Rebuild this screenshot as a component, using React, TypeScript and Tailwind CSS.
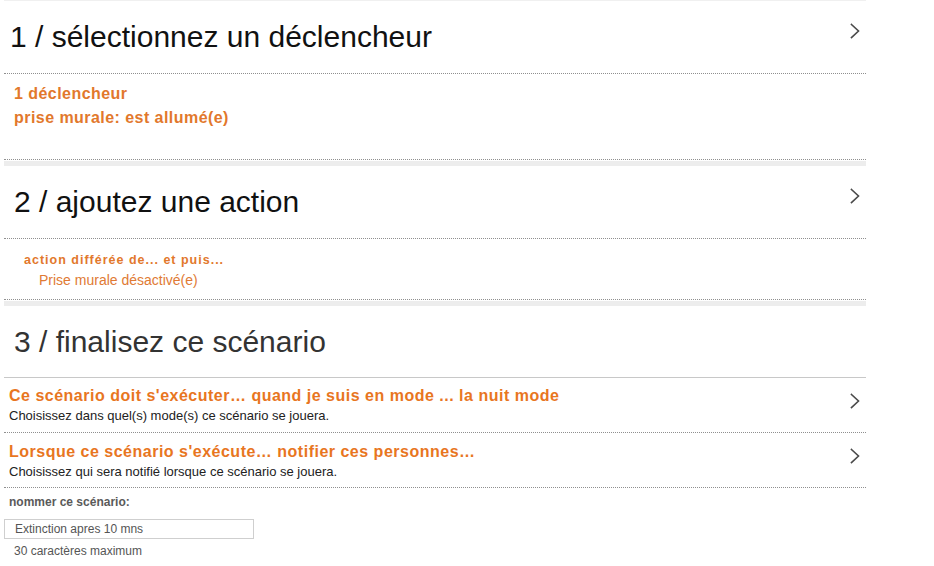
import React from "react";

const Chevron = ({ className = "" }: { className?: string }) => (
  <svg width="10" height="16" viewBox="0 0 10 16" className={className} fill="none">
    <path d="M1.5 1.5 L8.5 8 L1.5 14.5" stroke="#4a4a4a" strokeWidth="1.6" strokeLinecap="square" strokeLinejoin="miter" />
  </svg>
);

const Dotted = () => <div className="border-b border-dotted border-[#8f8f8f]" />;

const Band = () => (
  <>
    <div className="h-px bg-white" />
    <div className="h-[5px] bg-[#ededed]" />
  </>
);

export default function App() {
  return (
    <div
      className="w-[934px] h-[566px] overflow-hidden bg-white"
      style={{ fontFamily: '"Liberation Sans", Arial, sans-serif' }}
    >
      <div className="ml-[4px] w-[862px]">
        {/* Section 1 */}
        <div className="h-px bg-[#f0f0f0]" />
        <div className="h-[72px] flex items-center justify-between pl-[6px] pr-[6px]">
          <h1 className="text-[30px] leading-none text-[#111] font-normal">1 / sélectionnez un déclencheur</h1>
          <Chevron className="mb-[12px]" />
        </div>
        <Dotted />
        <div className="h-[85px] pt-[8px] pl-[10px] text-[16px] leading-[24px] font-bold tracking-[0.45px] text-[#e2782c]">
          <div>1 déclencheur</div>
          <div>prise murale: est allumé(e)</div>
        </div>
        <Dotted />
        <Band />

        {/* Section 2 */}
        <div className="h-[72px] flex items-center justify-between pl-[10px] pr-[6px]">
          <h2 className="text-[30px] leading-none text-[#111] font-normal">2 / ajoutez une action</h2>
          <Chevron className="mb-[12px]" />
        </div>
        <Dotted />
        <div className="h-[60px] pt-[11px]">
          <div className="pl-[20px] text-[12.5px] leading-[20px] font-bold tracking-[1px] text-[#e2782c]">
            action différée de... et puis...
          </div>
          <div className="pl-[35px] text-[14px] leading-[20px] text-[#e07a34]">Prise murale désactivé(e)</div>
        </div>
        <Dotted />
        <Band />

        {/* Section 3 */}
        <div className="h-[71px] flex items-center justify-between pl-[10px] pr-[6px]">
          <h2 className="text-[30px] leading-none text-[#333] font-normal">3 / finalisez ce scénario</h2>
        </div>
        <div className="h-px bg-[#c8c8c8]" />
        <div className="h-[54px] pt-[8px] pl-[5px] pr-[6px] flex justify-between items-start">
          <div>
            <div className="text-[16px] leading-[20px] font-bold tracking-[0.5px] text-[#e8761f]">
              Ce scénario doit s'exécuter… quand je suis en mode ... la nuit mode
            </div>
            <div className="text-[13px] leading-[20px] text-[#222]">
              Choisissez dans quel(s) mode(s) ce scénario se jouera.
            </div>
          </div>
          <Chevron className="mt-[7px]" />
        </div>
        <Dotted />
        <div className="h-[54px] pt-[9px] pl-[5px] pr-[6px] flex justify-between items-start">
          <div>
            <div className="text-[16px] leading-[20px] font-bold tracking-[0.5px] text-[#e8761f]">
              Lorsque ce scénario s'exécute… notifier ces personnes…
            </div>
            <div className="text-[13px] leading-[20px] text-[#222]">
              Choisissez qui sera notifié lorsque ce scénario se jouera.
            </div>
          </div>
          <Chevron className="mt-[6px]" />
        </div>
        <Dotted />
        <div className="pt-[6px] pl-[5px] text-[12px] leading-[16px] font-bold text-[#5a5a5a]">nommer ce scénario:</div>
        <div className="mt-[9px] w-[250px] h-[20px] border border-[#cfcfcf] pl-[10px] flex items-center text-[12px] text-[#555]">
          Extinction apres 10 mns
        </div>
        <div className="mt-[4px] pl-[10px] text-[12px] leading-[16px] text-[#555]">30 caractères maximum</div>
      </div>
    </div>
  );
}
